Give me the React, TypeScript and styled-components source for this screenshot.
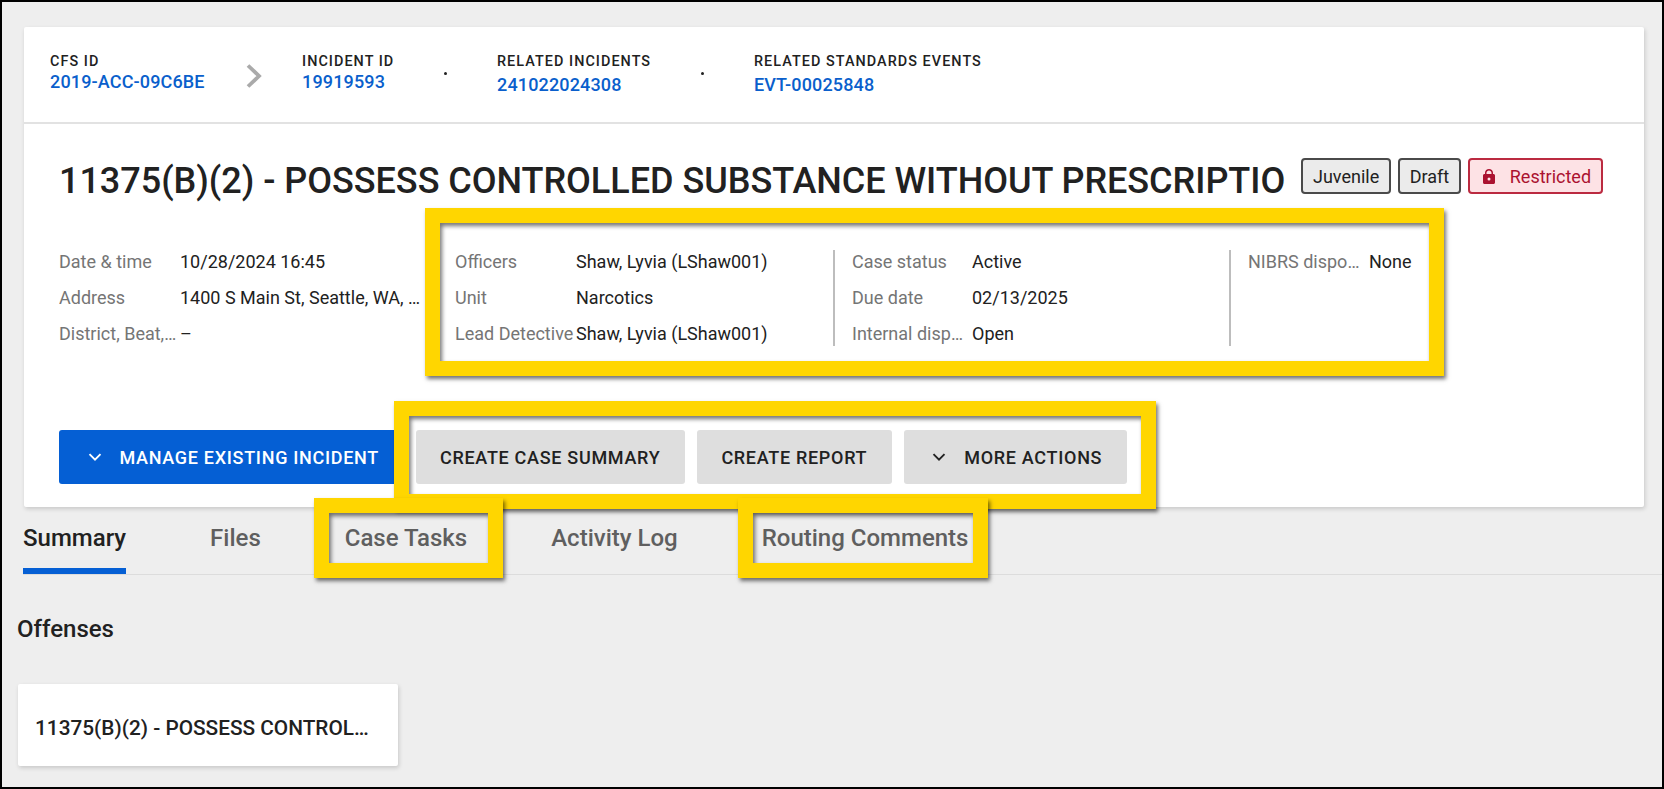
import styled, { createGlobalStyle } from 'styled-components';

const GlobalStyle = createGlobalStyle`
  html, body {
    margin: 0;
    padding: 0;
  }
  body {
    font-family: Roboto, "Liberation Sans", sans-serif;
    color: #212121;
  }
`;

const Page = styled.div`
  box-sizing: border-box;
  width: 1664px;
  height: 789px;
  border: 2px solid #000;
  background: #eeeeee;
  padding: 25px 18px 0 16px;
  overflow: hidden;
`;

const Card = styled.section`
  margin-left: 6px;
  background: #fff;
  box-shadow: 1px 2px 4px rgba(0, 0, 0, 0.16);
  border-radius: 2px;
`;

const IdBar = styled.div`
  display: flex;
  height: 95px;
  padding-left: 26px;
  border-bottom: 2px solid #e2e2e2;
`;

const IdItem = styled.div<{ $width: number; $low?: boolean }>`
  width: ${(p) => p.$width}px;
  padding-top: 26px;

  a {
    display: block;
    margin-top: ${(p) => (p.$low ? 4 : 1)}px;
  }
`;

const IdLabel = styled.div`
  font-size: 14.4px;
  line-height: 18px;
  font-weight: 500;
  letter-spacing: 1.05px;
  color: #212121;
`;

const IdLink = styled.a`
  font-size: 18px;
  line-height: 20px;
  font-weight: 500;
  letter-spacing: 0.15px;
  color: #0a5fcc;
`;

const Crumb = styled.div<{ $width: number }>`
  width: ${(p) => p.$width}px;
  display: flex;
  align-items: flex-start;
  padding-top: 37px;
`;

const Dot = styled.span`
  display: block;
  width: 3px;
  height: 3px;
  margin: 8px 0 0 -1px;
  border-radius: 50%;
  background: #212121;
`;

const Body = styled.div`
  padding: 34px 0 23px 35px;
`;

const TitleRow = styled.div`
  display: flex;
  align-items: flex-start;
`;

const Title = styled.h1`
  width: 1226px;
  margin: 0 16px 0 0;
  padding-top: 1px;
  height: 43px;
  overflow: hidden;
  white-space: nowrap;
  font-size: 36px;
  line-height: 44px;
  font-weight: 500;
  letter-spacing: -0.03px;
  color: #212121;
`;

const Chips = styled.div`
  display: flex;
  gap: 6.5px;
`;

const Chip = styled.span<{ $alert?: boolean }>`
  display: flex;
  align-items: center;
  gap: 15px;
  box-sizing: border-box;
  height: 36px;
  padding: 0 10px 0 ${(p) => (p.$alert ? 13 : 10)}px;
  border: 2px solid ${(p) => (p.$alert ? '#bb2a40' : '#4a4a4a')};
  border-radius: 4px;
  background: ${(p) => (p.$alert ? '#fde2e5' : '#ebebeb')};
  color: ${(p) => (p.$alert ? '#ab1230' : '#212121')};
  font-size: 18px;
`;

const Details = styled.div`
  display: flex;
  margin-top: 48px;
`;

const Highlighted = styled.div`
  position: relative;
  display: flex;
`;

const Frame = styled.span<{ $top: number; $right: number; $bottom: number; $left: number }>`
  position: absolute;
  top: ${(p) => p.$top}px;
  right: ${(p) => p.$right}px;
  bottom: ${(p) => p.$bottom}px;
  left: ${(p) => p.$left}px;
  border: 15px solid #ffd600;
  box-shadow: 2px 3px 4px rgba(0, 0, 0, 0.55), inset 2px 3px 4px rgba(0, 0, 0, 0.55);
  pointer-events: none;
`;

const DetailColumn = styled.dl<{
  $width: number;
  $divided?: boolean;
  $label?: number;
  $labelGap?: number;
  $endGap?: number;
}>`
  display: grid;
  grid-template-columns: ${(p) => p.$label ?? 120}px minmax(0, 1fr);
  grid-auto-rows: 24px;
  row-gap: 12px;
  box-sizing: border-box;
  width: ${(p) => p.$width}px;
  height: 96px;
  margin: 0;
  padding-left: ${(p) => (p.$divided ? 17 : 0)}px;
  padding-right: ${(p) => p.$endGap ?? 0}px;
  border-left: ${(p) => (p.$divided ? '2px solid #bdbdbd' : 'none')};
  font-size: 18px;
  line-height: 24px;

  dt, dd {
    margin: 0;
    white-space: nowrap;
    overflow: hidden;
    text-overflow: ellipsis;
  }

  dt {
    color: #757575;
    padding-right: ${(p) => p.$labelGap ?? 7}px;
  }

  dd {
    color: #212121;
  }
`;

const Actions = styled.div`
  display: flex;
  gap: 12px;
  margin-top: 84px;
`;

const ActionGroup = styled.div`
  position: relative;
  display: flex;
  gap: 12px;
`;

const Button = styled.button<{ $primary?: boolean }>`
  display: flex;
  align-items: center;
  gap: 18px;
  height: 54px;
  padding: 0 24.5px;
  border: none;
  border-radius: 3px;
  background: ${(p) => (p.$primary ? '#055fd4' : '#dedede')};
  color: ${(p) => (p.$primary ? '#fff' : '#212121')};
  font-family: inherit;
  font-size: 18px;
  font-weight: 500;
  letter-spacing: 0.7px;
  white-space: nowrap;

  svg {
    margin-left: 4px;
  }
`;

const Tabs = styled.nav`
  display: flex;
  gap: 84px;
  margin: 0 -18px 0 5px;
  height: 67px;
  border-bottom: 1px solid #dcdcdc;
`;

const TabItem = styled.div`
  position: relative;
`;

const Tab = styled.a<{ $active?: boolean }>`
  display: block;
  box-sizing: border-box;
  height: 67px;
  padding-top: 17px;
  font-size: 24px;
  line-height: 28px;
  font-weight: 500;
  white-space: nowrap;
  color: ${(p) => (p.$active ? '#212121' : '#5f5f5f')};
  border-bottom: ${(p) => (p.$active ? '6px solid #055fd4' : 'none')};
`;

const SectionTitle = styled.h2`
  margin: 40px 0 0 -1px;
  font-size: 24px;
  line-height: 28px;
  font-weight: 500;
  color: #212121;
`;

const OffenseCard = styled.div`
  box-sizing: border-box;
  width: 380px;
  height: 82px;
  margin-top: 41px;
  padding: 0 24px 0 17px;
  background: #fff;
  border-radius: 2px;
  box-shadow: 1px 2px 4px rgba(0, 0, 0, 0.16);
  font-size: 20.8px;
  line-height: 88px;
  font-weight: 500;
  color: #212121;
  white-space: nowrap;
  overflow: hidden;
  text-overflow: ellipsis;
`;

const Chevron = () => (
  <svg width="14" height="14" viewBox="0 0 14 14" fill="none" stroke="currentColor" strokeWidth="1.9">
    <path d="M1.500 4.200 7 9.700 12.500 4.200" />
  </svg>
);

const Lock = () => (
  <svg width="12" height="15" viewBox="0 0 12 15" fill="#ab1230">
    <path
      fillRule="evenodd"
      d="M10.500 5H10V3.800C10 1.700 8.200 0 6 0S2 1.700 2 3.800V5h-.5C.7 5 0 5.700 0 6.500v7C0 14.300.7 15 1.500 15h9c.8 0 1.500-.7 1.500-1.500v-7C12 5.700 11.300 5 10.500 5ZM3.500 5V3.800C3.500 2.500 4.600 1.500 6 1.500s2.500 1 2.500 2.300V5h-5ZM6 11.500A1.500 1.500 0 1 1 6 8.500a1.500 1.500 0 0 1 0 3Z"
    />
  </svg>
);

export default function App() {
  return (
    <>
      <GlobalStyle />
      <Page>
        <Card>
          <IdBar>
            <IdItem $width={196}>
              <IdLabel>CFS ID</IdLabel>
              <IdLink>2019-ACC-09C6BE</IdLink>
            </IdItem>
            <Crumb $width={56}>
              <svg width="16" height="24" viewBox="0 0 16 24" fill="none" stroke="#aaaaaa" strokeWidth="3.800">
                <path d="M2 1.500 13 12 2 22.500" />
              </svg>
            </Crumb>
            <IdItem $width={143}>
              <IdLabel>INCIDENT ID</IdLabel>
              <IdLink>19919593</IdLink>
            </IdItem>
            <Crumb $width={52}>
              <Dot />
            </Crumb>
            <IdItem $width={205} $low>
              <IdLabel>RELATED INCIDENTS</IdLabel>
              <IdLink>241022024308</IdLink>
            </IdItem>
            <Crumb $width={52}>
              <Dot />
            </Crumb>
            <IdItem $width={300} $low>
              <IdLabel>RELATED STANDARDS EVENTS</IdLabel>
              <IdLink>EVT-00025848</IdLink>
            </IdItem>
          </IdBar>
          <Body>
            <TitleRow>
              <Title>11375(B)(2) - POSSESS CONTROLLED SUBSTANCE WITHOUT PRESCRIPTION</Title>
              <Chips>
                <Chip>Juvenile</Chip>
                <Chip>Draft</Chip>
                <Chip $alert>
                  <Lock />
                  Restricted
                </Chip>
              </Chips>
            </TitleRow>
            <Details>
              <DetailColumn $width={396} $label={121} $labelGap={3} $endGap={30}>
                <dt>Date &amp; time</dt>
                <dd>10/28/2024 16:45</dd>
                <dt>Address</dt>
                <dd>1400 S Main St, Seattle, WA, 98144</dd>
                <dt>District, Beat, Sector</dt>
                <dd>–</dd>
              </DetailColumn>
              <Highlighted>
                <DetailColumn $width={378} $label={121} $labelGap={0}>
                  <dt>Officers</dt>
                  <dd>Shaw, Lyvia (LShaw001)</dd>
                  <dt>Unit</dt>
                  <dd>Narcotics</dd>
                  <dt>Lead Detective</dt>
                  <dd>Shaw, Lyvia (LShaw001)</dd>
                </DetailColumn>
                <DetailColumn $width={396} $divided>
                  <dt>Case status</dt>
                  <dd>Active</dd>
                  <dt>Due date</dt>
                  <dd>02/13/2025</dd>
                  <dt>Internal disposition</dt>
                  <dd>Open</dd>
                </DetailColumn>
                <DetailColumn $width={200} $divided $label={121} $labelGap={8}>
                  <dt>NIBRS disposition</dt>
                  <dd>None</dd>
                </DetailColumn>
                <Frame $top={-42} $right={-15} $bottom={-30} $left={-30} />
              </Highlighted>
            </Details>
            <Actions>
              <Button $primary>
                <Chevron />
                MANAGE EXISTING INCIDENT
              </Button>
              <ActionGroup>
                <Button>CREATE CASE SUMMARY</Button>
                <Button>CREATE REPORT</Button>
                <Button>
                  <Chevron />
                  MORE ACTIONS
                </Button>
                <Frame $top={-29} $right={-29} $bottom={-25} $left={-22} />
              </ActionGroup>
            </Actions>
          </Body>
        </Card>
        <Tabs>
          <TabItem>
            <Tab $active>Summary</Tab>
          </TabItem>
          <TabItem>
            <Tab>Files</Tab>
          </TabItem>
          <TabItem>
            <Tab>Case Tasks</Tab>
            <Frame $top={-9} $right={-36} $bottom={-4} $left={-31} />
          </TabItem>
          <TabItem>
            <Tab>Activity Log</Tab>
          </TabItem>
          <TabItem>
            <Tab>Routing Comments</Tab>
            <Frame $top={-9} $right={-20} $bottom={-4} $left={-24} />
          </TabItem>
        </Tabs>
        <SectionTitle>Offenses</SectionTitle>
        <OffenseCard>11375(B)(2) - POSSESS CONTROLLED SUBSTANCE WITHOUT PRESCRIPTION</OffenseCard>
      </Page>
    </>
  );
}
